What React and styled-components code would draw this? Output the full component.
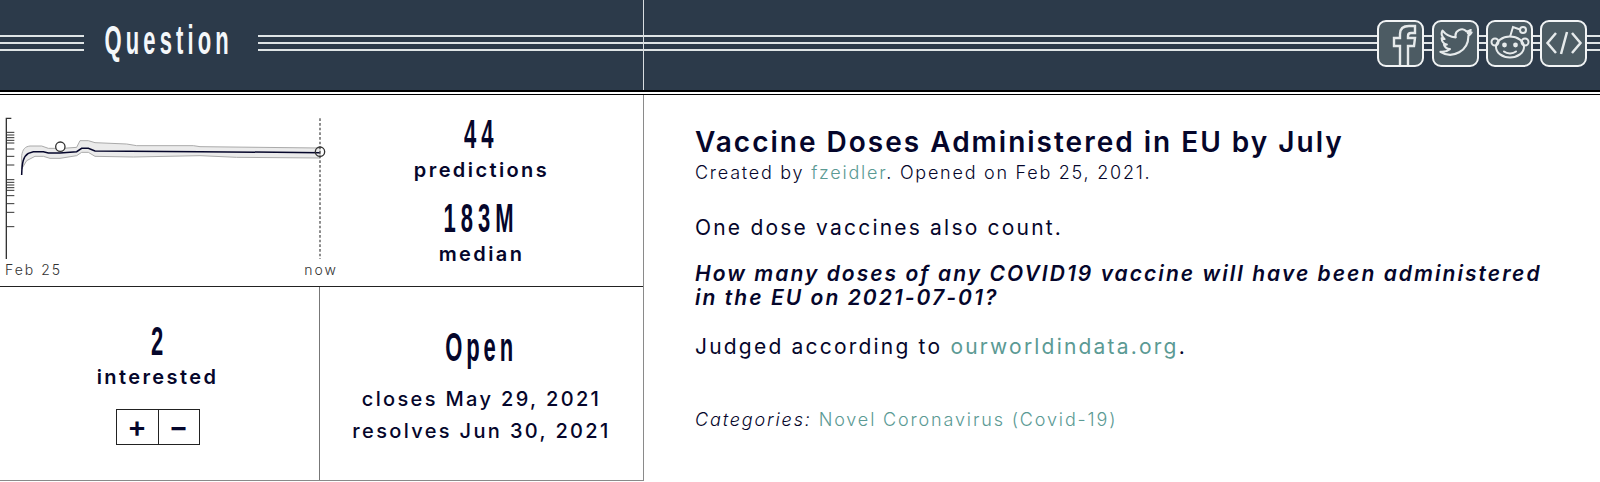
import React from 'react';
import styled, { createGlobalStyle } from 'styled-components';

const INK = '#05062b';
const LINK = '#5b9a94';

const GlobalStyle = createGlobalStyle`
    html, body {
        margin: 0;
        padding: 0;
        background: #ffffff;
        color: ${INK};
        font-family: Inter, "Open Sans", sans-serif;
    }
`;

const Page = styled.div`
    width: 1600px;
    height: 482px;
    overflow: hidden;
`;

const Header = styled.header`
    position: relative;
    height: 90px;
    background: #2c3a4a;
    display: flex;
    align-items: center;
    border-bottom: 2px solid #000000;
    box-shadow: 0 2px 0 #ffffff, 0 3px 0 #000000;
`;

const Divider = styled.div`
    position: absolute;
    left: 643px;
    top: 0;
    bottom: 0;
    width: 1px;
    background: #d8dde0;
`;

const Rule = styled.div`
    flex: ${props => props.$width ? `0 0 ${props.$width}px` : '1'};
    box-sizing: border-box;
    height: 16px;
    margin-top: -4px;
    border-top: 2px solid #dfe4e6;
    border-bottom: 2px solid #dfe4e6;
    background: linear-gradient(#dfe4e6, #dfe4e6) center / 100% 2px no-repeat;
`;

// no condensed face is installed, so the display type is squeezed horizontally
const Condensed = styled.span`
    display: inline-block;
    font-family: "Liberation Sans", Arial, sans-serif;
    font-size: 40px;
    font-weight: 700;
    line-height: 40px;
    white-space: nowrap;
    letter-spacing: ${props => props.$spacing}px;
    transform: scaleX(${props => props.$squeeze || 0.55});
`;

const HeaderTitle = styled.h1`
    flex: 0 0 127px;
    min-width: 0;
    margin: 0 26px 0 21px;
    display: flex;
    justify-content: center;
    font-weight: 400;
    color: #f4f7fa;
    position: relative;
    top: -5px;
`;

const Share = styled.a`
    flex: 0 0 47px;
    height: 47px;
    box-sizing: border-box;
    border: 2px solid #f2f4f5;
    border-radius: 9px;
    background: #4c5b63;
    display: flex;
    align-items: center;
    justify-content: center;
    margin-top: -4px;
    overflow: hidden;
    color: #e6eaeb;
`;

const Body = styled.main`
    display: flex;
    height: 390px;
`;

const LeftPane = styled.section`
    flex: 0 0 644px;
    box-sizing: border-box;
    height: 387px;
    margin-top: 2px;
    border-right: 1px solid #8a8a8a;
    border-bottom: 1px solid #8a8a8a;
    display: flex;
    flex-direction: column;
`;

const TopRow = styled.div`
    flex: 0 0 192px;
    display: flex;
    border-bottom: 1px solid #222222;
`;

const ChartBox = styled.div`
    flex: 0 0 350px;
    padding-top: 15px;
    box-sizing: border-box;
`;

const ChartSvg = styled.svg`
    display: block;
    width: 350px;
    height: 150px;
`;

const AxisLabels = styled.div`
    display: flex;
    justify-content: space-between;
    margin-top: 2px;
    padding: 0 12px 0 5px;
    font-size: 14px;
    font-weight: 300;
    line-height: 18px;
    letter-spacing: 2px;
    color: #333333;
`;

const StatsBox = styled.div`
    flex: 1;
    display: flex;
    flex-direction: column;
    align-items: center;
    padding-top: 20px;
    margin-left: -30px;
`;

const BottomRow = styled.div`
    flex: 1;
    display: flex;
`;

const Cell = styled.div`
    flex: ${props => props.$width ? `0 0 ${props.$width}px` : '1'};
    display: flex;
    flex-direction: column;
    align-items: center;
    padding-top: ${props => props.$top}px;
    padding-right: ${props => props.$width ? 4 : 0}px;
    border-right: ${props => props.$width ? '1px solid #777777' : 'none'};
    box-sizing: border-box;
`;

const StatLabel = styled.div`
    font-size: 20px;
    font-weight: 600;
    line-height: 32px;
    letter-spacing: 2.4px;
    margin-bottom: ${props => props.$below || 0}px;
`;

const Voter = styled.div`
    display: flex;
    margin-top: 16px;
    border: 1px solid #222222;
`;

const VoteButton = styled.button`
    width: 41px;
    height: 34px;
    padding: 0;
    background: #ffffff;
    border: none;
    border-left: ${props => props.$joined ? '1px solid #222222' : 'none'};
    font-family: Inter, sans-serif;
    font-size: 29px;
    font-weight: 600;
    line-height: 30px;
    color: ${INK};
`;

const Dates = styled.div`
    margin-top: 16px;
    text-align: center;
    font-size: 20px;
    font-weight: 500;
    line-height: 32px;
    letter-spacing: 2.35px;
    white-space: nowrap;
`;

const RightPane = styled.article`
    flex: 1;
    padding: 33px 40px 0 51px;
`;

const Title = styled.h2`
    margin: 0;
    font-size: 28px;
    font-weight: 600;
    line-height: 34px;
    letter-spacing: 2px;
`;

const Byline = styled.div`
    font-size: 18px;
    line-height: 26px;
    margin-top: 1px;
    letter-spacing: 1.75px;
    font-weight: 300;
    margin-bottom: 29px;
`;

const Link = styled.a`
    color: ${LINK};
`;

const Para = styled.p`
    margin: 0 0 ${props => props.$question ? 24 : 22}px;
    font-size: 21px;
    line-height: ${props => props.$question ? 24 : 25}px;
    letter-spacing: ${props => props.$question ? 2.05 : 2.2}px;
    font-style: ${props => props.$question ? 'italic' : 'normal'};
    font-weight: ${props => props.$question ? 600 : 400};
`;

const Categories = styled.div`
    margin-top: 49px;
    font-size: 18px;
    line-height: 24px;
    letter-spacing: 1.85px;
    font-weight: 300;
`;

const FacebookIcon = () => (
    <svg width="43" height="43" viewBox="0 0 43 43" fill="none" stroke="currentColor" strokeWidth="2.400">
        <path d="M21 44 V24 H15 V16 H21 V12 C21 6 25 4 30 4 H36 V11 H32 C29.5 11 29 12 29 14 V16 H36 L35 24 H29 V44" />
    </svg>
);

const TwitterIcon = () => (
    <svg width="34" height="34" viewBox="0 0 24 24" fill="none" stroke="currentColor" strokeWidth="1.500" strokeLinejoin="round">
        <path d="M23 4.5c-.8.4-1.7.6-2.6.7.9-.6 1.6-1.4 2-2.4-.9.5-1.9.9-2.9 1.1A4.5 4.5 0 0 0 11.8 8C8 7.8 4.700 6 2.500 3.200c-1.200 2-.6 4.600 1.400 6-.7 0-1.400-.2-2-.6 0 2.200 1.500 4.100 3.600 4.500-.7.200-1.400.200-2 .1.600 1.800 2.300 3.100 4.200 3.100A9 9 0 0 1 1 18.200 12.800 12.800 0 0 0 20.700 7c.9-.6 1.700-1.500 2.300-2.500z" />
    </svg>
);

const RedditIcon = () => (
    <svg width="40" height="40" viewBox="0 0 40 40" fill="none" stroke="currentColor" strokeWidth="2">
        <ellipse cx="20" cy="24" rx="14" ry="10.500" />
        <circle cx="5" cy="19" r="3.500" />
        <circle cx="35" cy="19" r="3.500" />
        <circle cx="33" cy="7" r="3" />
        <path d="M20 14 L23 4 L30 6.500" />
        <circle cx="14.500" cy="22" r="2.400" fill="currentColor" stroke="none" />
        <circle cx="25.500" cy="22" r="2.400" fill="currentColor" stroke="none" />
        <path d="M14 28.500 C17 31 23 31 26 28.500" strokeLinecap="round" />
    </svg>
);

const CodeIcon = () => (
    <svg width="38" height="30" viewBox="0 0 38 30" fill="none" stroke="currentColor" strokeWidth="2.500">
        <path d="M11 5 L2.500 15 L11 25" />
        <path d="M27 5 L35.500 15 L27 25" />
        <path d="M22 4 L16 26" />
    </svg>
);

const Chart = () => (
    <ChartSvg viewBox="0 30 1050 450">
        <path d="M19 480 V58 H34" fill="none" stroke="#333333" strokeWidth="4" />
        {[100, 108, 116, 124, 132, 150, 172, 198, 242, 250, 258, 266, 274, 290, 314, 340, 383].map(y => (
            <path key={y} d="M19 0 H43" transform={`translate(0 ${y})`} stroke="#333333" strokeWidth="3" />
        ))}
        <path
            d="M65 210 V170 C68 150 75 143 90 141 L125 141 L145 148 L190 148 L230 145 L240 125 L265 125 L285 131 L380 135 L410 140 L580 140 L600 143 L960 147 V177 L710 175 L600 170 L400 174 L285 172 L265 160 L245 160 L230 170 L180 178 L150 178 L130 172 L105 172 L80 185 Z"
            fill="#ebebeb"
            stroke="#aaaaaa"
            strokeWidth="3"
        />
        <path
            d="M65 228 C66 190 70 172 85 163 L100 158 L130 158 L145 162 L180 162 L230 158 L245 148 L265 148 L285 156 L600 158 L960 161"
            fill="none"
            stroke={INK}
            strokeWidth="4.500"
        />
        <path d="M960 58 V480" stroke="#555555" strokeWidth="4" strokeDasharray="8 6" />
        <circle cx="181" cy="143" r="14" fill="#ffffff" stroke="#333333" strokeWidth="4" />
        <circle cx="960" cy="158" r="14" fill="none" stroke="#333333" strokeWidth="4" />
    </ChartSvg>
);

const App = () => (
    <Page>
        <GlobalStyle />
        <Header>
            <Divider />
            <Rule $width={84} />
            <HeaderTitle><Condensed $spacing={7.500}>Question</Condensed></HeaderTitle>
            <Rule />
            <Share><FacebookIcon /></Share>
            <Rule $width={8} />
            <Share><TwitterIcon /></Share>
            <Rule $width={7} />
            <Share><RedditIcon /></Share>
            <Rule $width={7} />
            <Share><CodeIcon /></Share>
            <Rule $width={13} />
        </Header>
        <Body>
            <LeftPane>
                <TopRow>
                    <ChartBox>
                        <Chart />
                        <AxisLabels>
                            <span>Feb 25</span>
                            <span>now</span>
                        </AxisLabels>
                    </ChartBox>
                    <StatsBox>
                        <Condensed $spacing={9}>44</Condensed>
                        <StatLabel $below={12}>predictions</StatLabel>
                        <Condensed $spacing={9}>183M</Condensed>
                        <StatLabel>median</StatLabel>
                    </StatsBox>
                </TopRow>
                <BottomRow>
                    <Cell $width={320} $top={34}>
                        <Condensed $spacing={0}>2</Condensed>
                        <StatLabel>interested</StatLabel>
                        <Voter>
                            <VoteButton>+</VoteButton>
                            <VoteButton $joined>−</VoteButton>
                        </Voter>
                    </Cell>
                    <Cell $top={40}>
                        <Condensed $spacing={7}>Open</Condensed>
                        <Dates>
                            closes May 29, 2021<br />
                            resolves Jun 30, 2021
                        </Dates>
                    </Cell>
                </BottomRow>
            </LeftPane>
            <RightPane>
                <Title>Vaccine Doses Administered in EU by July</Title>
                <Byline>Created by <Link>fzeidler</Link>. Opened on Feb 25, 2021.</Byline>
                <Para>One dose vaccines also count.</Para>
                <Para $question>How many doses of any COVID19 vaccine will have been administered in the EU on 2021-07-01?</Para>
                <Para>Judged according to <Link>ourworldindata.org</Link>.</Para>
                <Categories><em>Categories:</em> <Link>Novel Coronavirus (Covid-19)</Link></Categories>
            </RightPane>
        </Body>
    </Page>
);

export default App;
